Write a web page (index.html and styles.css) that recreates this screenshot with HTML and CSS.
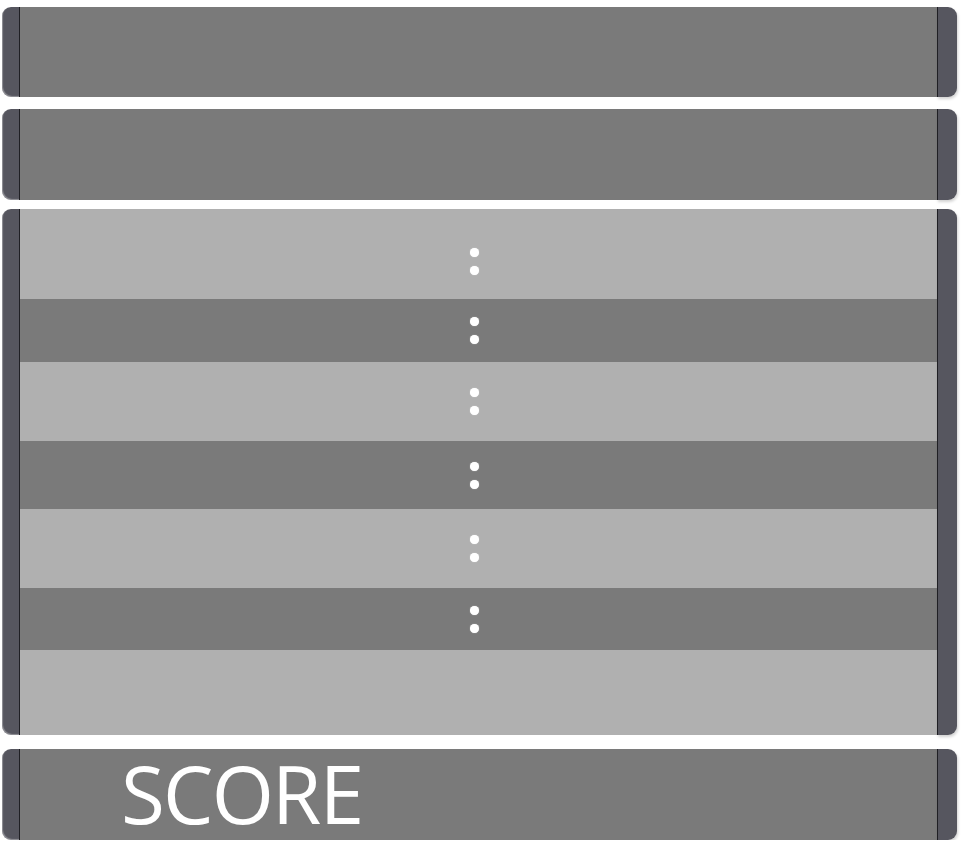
FILE: index.html
```html
<!DOCTYPE html>
<html>
<head>
<meta charset="utf-8">
<link rel="stylesheet" href="styles.css">
</head>
<body>
<div class="board">
  <div class="panel p1">
    <div class="cap left"></div>
    <div class="body dark"></div>
    <div class="cap right"></div>
  </div>
  <div class="panel p2">
    <div class="cap left"></div>
    <div class="body dark"></div>
    <div class="cap right"></div>
  </div>
  <div class="panel p3">
    <div class="cap left"></div>
    <div class="body rows">
      <div class="row light first"><span class="colon"><i></i><i></i></span></div>
      <div class="row dark r2"><span class="colon"><i></i><i></i></span></div>
      <div class="row light r3"><span class="colon"><i></i><i></i></span></div>
      <div class="row dark r4"><span class="colon"><i></i><i></i></span></div>
      <div class="row light r5"><span class="colon"><i></i><i></i></span></div>
      <div class="row dark r6"><span class="colon"><i></i><i></i></span></div>
      <div class="row light last"></div>
    </div>
    <div class="cap right"></div>
  </div>
  <div class="panel p4">
    <div class="cap left"></div>
    <div class="body dark score"><span class="score-label">SCORE</span></div>
    <div class="cap right"></div>
  </div>
</div>
</body>
</html>
```
FILE: styles.css
```css
html, body {
  margin: 0;
  padding: 0;
  background: #ffffff;
}
.board {
  width: 955px;
  margin-left: 2px;
  padding-top: 7px;
  display: flex;
  flex-direction: column;
}
.panel {
  display: flex;
  flex-direction: row;
}
.p1 { height: 90px; }
.p2 { height: 91px; margin-top: 12px; }
.p3 { height: 526px; margin-top: 9px; }
.p4 { height: 91px; margin-top: 14px; }

.cap {
  background: #56565f;
  flex: 0 0 auto;
}
.cap.left {
  width: 17px;
  border-radius: 9px 0 0 9px;
  border-right: 1px solid #1f1f24;
  box-shadow: inset 1px -1px 1px rgba(255,255,255,0.35);
}
.cap.right {
  width: 19px;
  border-radius: 0 9px 9px 0;
  border-left: 1px solid #1f1f24;
  box-shadow: 1px 2px 3px rgba(0,0,0,0.18);
}
.body {
  flex: 1 1 auto;
  display: flex;
}
.dark { background: #7a7a7a; }
.light { background: #b0b0b0; }
.rows {
  flex-direction: column;
}
.row {
  display: flex;
  justify-content: center;
  align-items: center;
}
.row.first { height: 90px; padding-top: 14px; box-sizing: border-box; }
.r2 { height: 63px; }
.r3 { height: 79px; }
.r4 { height: 68px; }
.r5 { height: 79px; }
.r6 { height: 62px; }
.row.last { flex: 1 1 auto; }
.colon {
  display: flex;
  flex-direction: column;
  gap: 9px;
  margin-right: 8px;
}
.colon i {
  display: block;
  width: 9px;
  height: 9px;
  border-radius: 50%;
  background: #ffffff;
  box-shadow: 0 0 1px rgba(255,255,255,0.8);
}
.score {
  align-items: center;
}
.score-label {
  font-family: "Open Sans", "Noto Sans", sans-serif;
  font-size: 80px;
  line-height: 1.1;
  color: #ffffff;
  margin-left: 101px;
  margin-bottom: 4px;
  letter-spacing: -1.8px;
}
```
